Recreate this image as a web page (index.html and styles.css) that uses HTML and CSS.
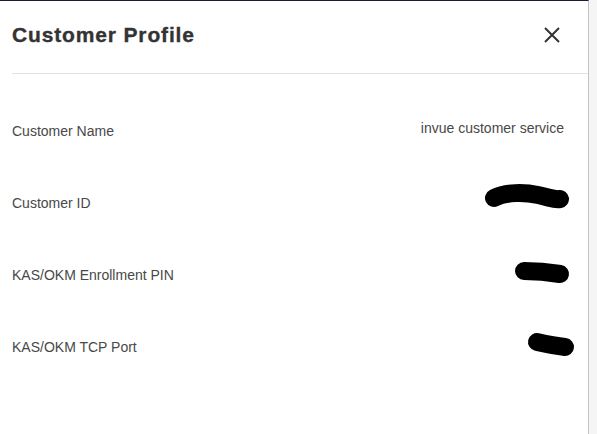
FILE: index.html
```
<!DOCTYPE html>
<html lang="en">
<head>
  <meta charset="UTF-8">
  <meta name="viewport" content="width=device-width, initial-scale=1.0">
  <title>Customer Profile</title>
  <link rel="stylesheet" href="styles.css">
</head>
<body>
  <div class="page">
    <aside class="profile">
      <header class="profile-head">
        <h1>Customer Profile</h1>
        <button class="close" aria-label="Close">
          <svg width="16" height="16" viewBox="0 0 16 16">
            <path d="M1 1 L15 15 M15 1 L1 15" stroke="#333" stroke-width="2" fill="none" />
          </svg>
        </button>
      </header>

      <dl class="fields">
        <div class="field">
          <dt>Customer Name</dt>
          <dd class="text">invue customer service</dd>
        </div>

        <div class="field">
          <dt>Customer ID</dt>
          <dd>
            <svg class="redact" width="110" height="40" viewBox="0 0 110 40">
              <path d="M28 15 C 40 9, 58 9, 72 12 S 88 17, 94 16" />
            </svg>
          </dd>
        </div>

        <div class="field">
          <dt>KAS/OKM Enrollment PIN</dt>
          <dd>
            <svg class="redact" width="110" height="40" viewBox="0 0 110 40">
              <path d="M58 16 C 70 16, 82 17, 94 19" />
            </svg>
          </dd>
        </div>

        <div class="field">
          <dt>KAS/OKM TCP Port</dt>
          <dd>
            <svg class="redact" width="110" height="40" viewBox="0 0 110 40">
              <path d="M71 15 C 80 17, 90 19, 99 20" />
            </svg>
          </dd>
        </div>
      </dl>
    </aside>
  </div>
</body>
</html>
```

FILE: styles.css
```
* {
  box-sizing: border-box;
  margin: 0;
  padding: 0;
}

body {
  font-family: "Liberation Sans", Arial, sans-serif;
  color: #333;
  background-color: #f5f5f5;
}

.page {
  display: flex;
  height: 434px;
}

.profile {
  width: 589px;
  background-color: #fff;
  border-top: 1px solid #1b1f33;
  border-right: 1px solid #c4c4c4;
}

.profile-head {
  display: flex;
  align-items: center;
  justify-content: space-between;
  height: 73px;
  margin-left: 12px;
  padding-right: 28px;
  padding-bottom: 5px;
  border-bottom: 1px solid #e3e3e3;
}

.profile-head h1 {
  font-size: 21px;
  font-weight: bold;
  letter-spacing: 0.85px;
  -webkit-text-stroke: 0.35px #333;
  color: #333;
}

.close {
  display: flex;
  border: none;
  background: none;
  cursor: pointer;
}

.fields {
  padding: 21px 24px 0 12px;
}

.field {
  display: flex;
  align-items: center;
  justify-content: space-between;
  height: 72px;
  font-size: 14px;
  color: #484848;
}

.field dd {
  display: flex;
}

.field .text {
  padding-bottom: 6px;
}

.redact {
  margin-right: -12px;
}

.redact path {
  fill: none;
  stroke: #000;
  stroke-width: 18;
  stroke-linecap: round;
}
```
